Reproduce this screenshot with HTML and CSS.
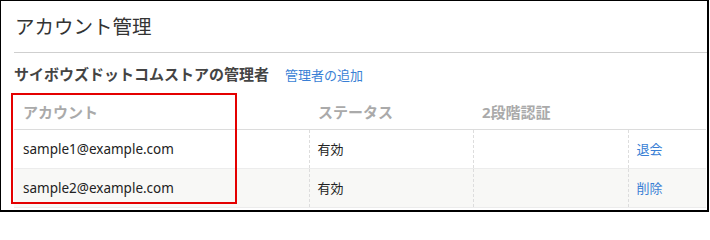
FILE: index.html
```html
<!DOCTYPE html>
<html lang="ja">
<head>
<meta charset="utf-8">
<title>アカウント管理</title>
<link rel="stylesheet" href="styles.css">
</head>
<body>
<div class="frame">
  <h1 class="title">アカウント管理</h1>
  <div class="subhead">
    <h2 class="subtitle">サイボウズドットコムストアの管理者</h2>
    <a class="link add-link" href="#">管理者の追加</a>
  </div>
  <div class="table-wrap">
    <table class="accounts">
      <colgroup>
        <col class="col-account">
        <col class="col-status">
        <col class="col-2fa">
        <col class="col-action">
      </colgroup>
      <thead>
        <tr>
          <th>アカウント</th>
          <th>ステータス</th>
          <th>2段階認証</th>
          <th></th>
        </tr>
      </thead>
      <tbody>
        <tr>
          <td class="email">sample1@example.com</td>
          <td>有効</td>
          <td></td>
          <td><a class="link" href="#">退会</a></td>
        </tr>
        <tr class="alt">
          <td class="email">sample2@example.com</td>
          <td>有効</td>
          <td></td>
          <td><a class="link" href="#">削除</a></td>
        </tr>
      </tbody>
    </table>
    <div class="highlight"></div>
  </div>
</div>
</body>
</html>
```

FILE: styles.css
```css
html, body {
  margin: 0;
  padding: 0;
  background: #fff;
}

body {
  font-family: "Noto Sans", "Noto Sans CJK JP", sans-serif;
  color: #333;
}

.frame {
  box-sizing: border-box;
  width: 709px;
  height: 212px;
  border-style: solid;
  border-color: #000;
  border-width: 1px 2px 2px 1px;
  padding-left: 13px;
  overflow: hidden;
}

.title {
  margin: 0;
  padding: 14px 0 13px 1px;
  font-size: 19.5px;
  line-height: 24px;
  font-weight: normal;
  color: #333;
  border-bottom: 1px solid #cfcfcf;
}

.subhead {
  display: flex;
  align-items: baseline;
  gap: 16px;
  margin-top: 11px;
  height: 20px;
}

.subtitle {
  margin: 0;
  font-size: 15px;
  line-height: 20px;
  font-weight: bold;
  color: #444;
}

.link {
  color: #3a7fd5;
  text-decoration: none;
}

.add-link {
  font-size: 13px;
  line-height: 20px;
}

.table-wrap {
  position: relative;
  margin-top: 10px;
  width: 692px;
}

.accounts {
  width: 692px;
  border-collapse: collapse;
  table-layout: fixed;
}

.col-account { width: 295px; }
.col-status { width: 164px; }
.col-2fa { width: 155px; }
.col-action { width: 78px; }

.accounts th,
.accounts td {
  box-sizing: border-box;
}

.accounts th {
  height: 35px;
  padding: 0 0 0 9px;
  text-align: left;
  font-size: 15px;
  font-weight: bold;
  color: #aaa;
  border-bottom: 1px solid #dcdcdc;
}

.accounts td {
  height: 39px;
  padding: 0 0 0 8px;
  font-size: 13px;
  color: #222;
  border-bottom: 1px solid #ececec;
  border-left: 1px dashed #dddddd;
}

.accounts td:first-child {
  border-left: none;
  padding-left: 9px;
}

.accounts td.email {
  font-size: 13.5px;
}

.accounts tr.alt td {
  background: #f8f8f6;
}

.highlight {
  position: absolute;
  left: -3px;
  top: -1px;
  width: 226px;
  height: 111px;
  box-sizing: border-box;
  border: 2px solid #e40000;
  pointer-events: none;
}
```
